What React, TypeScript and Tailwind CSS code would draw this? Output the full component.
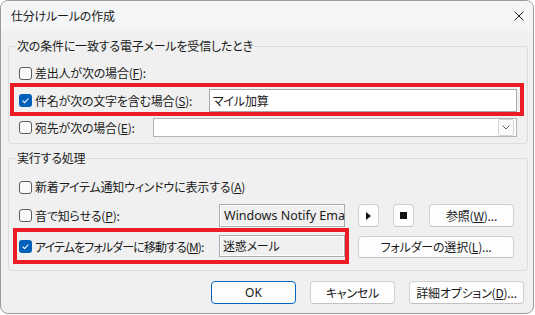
import React from "react";

const jp = "[font-family:'Noto_Sans_CJK_JP','Noto_Sans',sans-serif] [font-feature-settings:'palt']";
const btn = "flex items-center justify-center whitespace-nowrap rounded-[4px] border border-[#d0d0d0] border-b-[#c2c2c2] bg-[#fdfdfd]";

function Check({ on }: { on?: boolean }) {
  if (on) {
    return (
      <span className="flex h-[13px] w-[13px] shrink-0 items-center justify-center rounded-[3px] bg-[#005fb8]">
        <svg width="9" height="9" viewBox="0 0 9 9">
          <path d="M1.6 4.7 L3.6 6.6 L7.4 2.5" fill="none" stroke="#fff" strokeWidth="1.1" />
        </svg>
      </span>
    );
  }
  return <span className="h-[13px] w-[13px] shrink-0 rounded-[3px] border border-[#5d5d5d] bg-[#fafafa]" />;
}

export default function App() {
  return (
    <div className={`h-[315px] w-[535px] bg-white ${jp}`}>
      <div className="flex h-[314px] w-[534px] flex-col overflow-hidden rounded-[8px] border border-[#9b9b9b] bg-[#f0f0f0] text-[12px] leading-[16px] tracking-[-0.2px] text-[#1a1a1a]">
        {/* title bar */}
        <div className="flex h-[30px] shrink-0 items-center justify-between bg-[#f4f5f7] pl-[10px] pr-[9px]">
          <span>仕分けルールの作成</span>
          <svg width="10" height="10" viewBox="0 0 10 10">
            <path d="M0.5 0.5 L9.5 9.5 M9.5 0.5 L0.5 9.5" stroke="#1a1a1a" strokeWidth="1" />
          </svg>
        </div>

        <div className="relative flex flex-1 flex-col">
          {/* 条件 */}
          <fieldset className="ml-[7px] mt-[7px] w-[520px] rounded-[4px] border border-[#dcdcdc]">
            <legend className="ml-[7px] px-[1px] leading-[16px]">次の条件に一致する電子メールを受信したとき</legend>
            <div className="flex flex-col px-[10px] pb-[6px] pt-[9px]">
              <div className="flex h-[20px] items-center gap-[3px] whitespace-nowrap">
                <Check />
                <span>差出人が次の場合(<u>F</u>):</span>
              </div>
              <div className="mt-[6px] flex h-[23px] items-center">
                <div className="flex w-[190px] shrink-0 items-center gap-[3px] whitespace-nowrap">
                  <Check on />
                  <span>件名が次の文字を含む場合(<u>S</u>):</span>
                </div>
                <div className="flex h-[23px] flex-1 items-center border border-[#a8a8a8] bg-white pl-[3px]">マイル加算</div>
              </div>
              <div className="mt-[6px] flex h-[19px] items-center">
                <div className="flex w-[134px] shrink-0 items-center gap-[3px] whitespace-nowrap">
                  <Check />
                  <span>宛先が次の場合(<u>E</u>):</span>
                </div>
                <div className="flex h-[19px] flex-1 items-center justify-end border border-[#b4b4b4] bg-white pr-[2px]">
                  <div className="flex h-[17px] w-[16px] items-center justify-center rounded-[2px] border border-[#d4d4d4] bg-[#fbfbfb]">
                    <svg width="8" height="5" viewBox="0 0 8 5">
                      <path d="M0.5 0.5 L4 4 L7.5 0.5" fill="none" stroke="#606060" strokeWidth="1" />
                    </svg>
                  </div>
                </div>
              </div>
            </div>
          </fieldset>

          {/* 処理 */}
          <fieldset className="ml-[7px] mt-[6px] w-[520px] rounded-[4px] border border-[#dcdcdc]">
            <legend className="ml-[7px] px-[1px] leading-[16px]">実行する処理</legend>
            <div className="flex flex-col px-[10px] pb-[12px] pt-[11px]">
              <div className="flex h-[20px] items-center gap-[3px] whitespace-nowrap">
                <Check />
                <span>新着アイテム通知ウィンドウに表示する(<u>A</u>)</span>
              </div>
              <div className="mt-[7px] flex h-[23px] items-center">
                <div className="flex w-[200px] shrink-0 items-center gap-[3px] whitespace-nowrap">
                  <Check />
                  <span>音で知らせる(<u>P</u>):</span>
                </div>
                <div className="flex h-[23px] w-[126px] shrink-0 items-center whitespace-nowrap border border-[#ababab] bg-[#f0f0f0] pl-[4px] text-[12.5px] tracking-normal shadow-[inset_0_0_0_1px_#ffffff] [font-family:'Noto_Sans',sans-serif]">
                  Windows Notify Ema
                </div>
                <div className={`${btn} ml-[13px] h-[23px] w-[21px]`}>
                  <svg width="5" height="8" viewBox="0 0 5 8">
                    <path d="M0 0 L5 4 L0 8 Z" fill="#111" />
                  </svg>
                </div>
                <div className={`${btn} ml-[14px] h-[23px] w-[21px]`}>
                  <span className="h-[7px] w-[7px] bg-[#111]" />
                </div>
                <div className={`${btn} ml-[15px] h-[23px] w-[85px]`}>
                  <span>参照(<u>W</u>)...</span>
                </div>
              </div>
              <div className="mt-[8px] flex h-[23px] items-center">
                <div className="flex w-[200px] shrink-0 items-center gap-[3px] whitespace-nowrap">
                  <Check on />
                  <span className="tracking-[-0.9px]">アイテムをフォルダーに移動する(<u>M</u>):</span>
                </div>
                <div className="flex h-[22px] w-[126px] shrink-0 items-center self-start border border-[#ababab] bg-[#f0f0f0] pl-[3px] shadow-[inset_0_0_0_1px_#ffffff]">
                  迷惑メール
                </div>
                <div className={`${btn} ml-[13px] h-[22px] w-[156px] self-end`}>
                  <span>フォルダーの選択(<u>L</u>)...</span>
                </div>
              </div>
            </div>
          </fieldset>

          {/* buttons */}
          <div className="mb-[9px] mt-auto flex justify-end gap-[14px] pr-[9px]">
            <div className="flex h-[23px] w-[85px] items-center justify-center rounded-[4px] border border-[#0067c0] bg-[#fdfdfd] tracking-normal [font-family:'Noto_Sans',sans-serif]">
              OK
            </div>
            <div className={`${btn} h-[23px] w-[85px]`}>キャンセル</div>
            <div className={`${btn} h-[23px] w-[115px]`}>
              <span>詳細オプション(<u>D</u>)...</span>
            </div>
          </div>

          {/* annotation boxes */}
          <div className="absolute left-[9px] top-[52px] h-[33px] w-[514px] border-4 border-[#ed1c24]" />
          <div className="absolute left-[12px] top-[197px] h-[36px] w-[336px] border-4 border-[#ed1c24]" />
        </div>
      </div>
    </div>
  );
}
